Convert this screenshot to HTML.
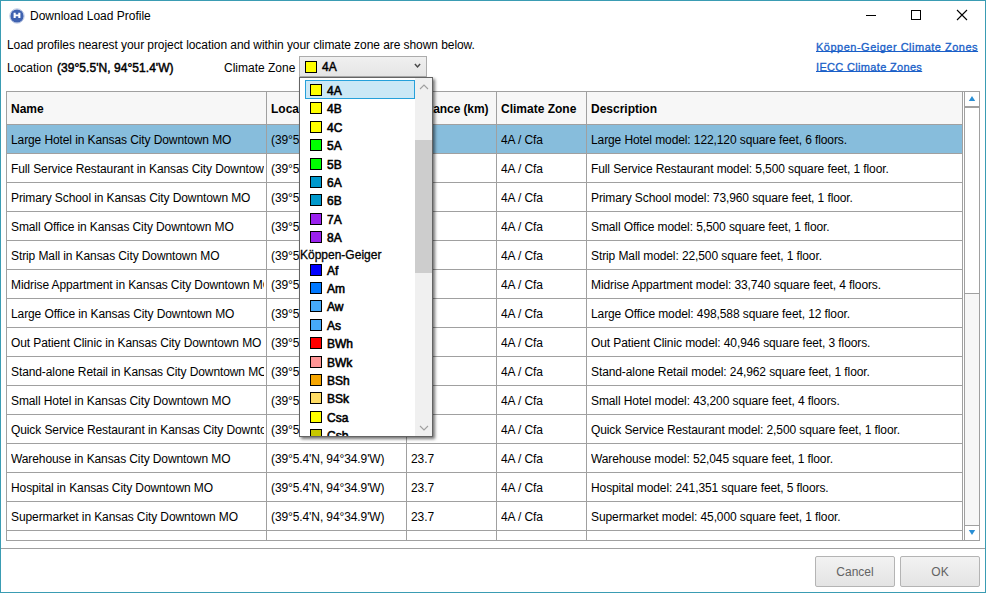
<!DOCTYPE html>
<html><head><meta charset="utf-8"><style>
*{box-sizing:border-box}
html,body{margin:0;padding:0}
body{width:986px;height:593px;position:relative;overflow:hidden;background:#fff;font-family:"Liberation Sans",sans-serif;font-size:12px;color:#000}
.a{position:absolute;white-space:nowrap}
.win{position:absolute;left:0;top:0;width:986px;height:593px;border:1px solid #3a9cb3}
.t{line-height:16px}
.cell{position:absolute;overflow:hidden;white-space:nowrap;line-height:16px;letter-spacing:-0.1px}
.hl{position:absolute;height:1px;background:#a0a0a0}
.vl{position:absolute;width:1px;background:#a0a0a0}
.sw{position:absolute;width:12px;height:12px;border:1px solid #000}
.it{position:absolute;-webkit-text-stroke:0.55px #000;line-height:16px}
.lnk{position:absolute;color:#1a5fc8;text-decoration:underline;text-decoration-skip-ink:none;text-underline-offset:-0.4px;-webkit-text-stroke:0.3px #1a5fc8;font-size:11px;line-height:16px;white-space:nowrap}
.btn{position:absolute;top:556px;width:80px;height:31px;border:1px solid #b4b4b4;border-radius:2px;background:linear-gradient(#f2f2f2,#e4e4e4);color:#636363;text-align:center;line-height:31px;font-size:12px}
</style></head><body>
<div class="win"></div>

<svg class="a" style="left:9px;top:8px" width="16" height="16" viewBox="0 0 16 16"><circle cx="8" cy="8" r="6.6" fill="#3f62b0"/><circle cx="8" cy="8" r="7.2" fill="none" stroke="#3f62b0" stroke-opacity=".35" stroke-width="1"/><path d="M4.6 4.8h2.1v1.7h2.6V4.8h2.1v5.1H9.3V8.2H6.7v1.7H4.6z" fill="#fff"/></svg>
<div class="a t" style="left:30px;top:8px;font-size:12px">Download Load Profile</div>
<div class="a" style="left:866px;top:15px;width:10px;height:1px;background:#000"></div>
<div class="a" style="left:911px;top:10px;width:10px;height:10px;border:1px solid #000"></div>
<svg class="a" style="left:956px;top:9px" width="12" height="12" viewBox="0 0 12 12"><path d="M1 1L11 11M11 1L1 11" stroke="#000" stroke-width="1.1"/></svg>

<div class="a t" style="left:7px;top:37px;letter-spacing:-0.065px">Load profiles nearest your project location and within your climate zone are shown below.</div>
<div class="a t" style="left:7px;top:60px">Location</div>
<div class="a t" style="left:57px;top:60px;-webkit-text-stroke:0.45px #000;letter-spacing:0.05px">(39&deg;5.5'N, 94&deg;51.4'W)</div>
<div class="a t" style="left:224px;top:60px">Climate Zone</div>
<div class="lnk" style="left:816px;top:39px;letter-spacing:0.5px">K&ouml;ppen-Geiger Climate Zones</div>
<div class="lnk" style="left:816px;top:59px;letter-spacing:0.33px">IECC Climate Zones</div>

<div class="a" style="left:299px;top:56px;width:128px;height:21px;border:1px solid #acacac;background:linear-gradient(#f0f0f0,#e5e5e5)"></div>
<div class="sw" style="left:305px;top:61px;background:#ffff00"></div>
<div class="a t" style="left:322px;top:59px;-webkit-text-stroke:0.45px #000">4A</div>
<svg class="a" style="left:414px;top:63px" width="7" height="6" viewBox="0 0 7 6"><path d="M0.9 1L3.5 3.9L6.1 1" fill="none" stroke="#4a4a4a" stroke-width="1.5"/></svg>

<div class="a" style="left:6px;top:91px;width:974px;height:450px;border:1px solid #a0a0a0"></div>
<div class="a" style="left:7px;top:92px;width:955px;height:32px;background:#f7f7f7"></div>
<div class="a" style="left:7px;top:125px;width:955px;height:28px;background:#87bddc"></div>
<div class="vl" style="left:266px;top:91px;height:449px"></div>
<div class="vl" style="left:406px;top:91px;height:449px"></div>
<div class="vl" style="left:496px;top:91px;height:449px"></div>
<div class="vl" style="left:586px;top:91px;height:449px"></div>
<div class="vl" style="left:962px;top:91px;height:449px"></div>
<div class="a" style="left:963px;top:92px;width:1px;height:448px;background:#fff"></div>
<div class="hl" style="left:6px;top:124px;width:957px"></div>
<div class="hl" style="left:6px;top:153px;width:957px"></div>
<div class="hl" style="left:6px;top:182px;width:957px"></div>
<div class="hl" style="left:6px;top:211px;width:957px"></div>
<div class="hl" style="left:6px;top:240px;width:957px"></div>
<div class="hl" style="left:6px;top:269px;width:957px"></div>
<div class="hl" style="left:6px;top:298px;width:957px"></div>
<div class="hl" style="left:6px;top:327px;width:957px"></div>
<div class="hl" style="left:6px;top:356px;width:957px"></div>
<div class="hl" style="left:6px;top:385px;width:957px"></div>
<div class="hl" style="left:6px;top:414px;width:957px"></div>
<div class="hl" style="left:6px;top:443px;width:957px"></div>
<div class="hl" style="left:6px;top:472px;width:957px"></div>
<div class="hl" style="left:6px;top:501px;width:957px"></div>
<div class="hl" style="left:6px;top:530px;width:957px"></div>
<div class="cell" style="left:11px;top:101px;width:255px;font-weight:bold;letter-spacing:0">Name</div>
<div class="cell" style="left:271px;top:101px;width:135px;font-weight:bold;letter-spacing:0">Location</div>
<div class="cell" style="left:411px;top:101px;width:85px;font-weight:bold;letter-spacing:-0.1px">Distance (km)</div>
<div class="cell" style="left:501px;top:101px;width:85px;font-weight:bold;letter-spacing:0">Climate Zone</div>
<div class="cell" style="left:591px;top:101px;width:372px;font-weight:bold;letter-spacing:0">Description</div>
<div class="cell" style="left:11px;top:132px;width:253px">Large Hotel in Kansas City Downtown MO</div>
<div class="cell" style="left:271px;top:132px;width:135px">(39&deg;5.4'N, 94&deg;34.9'W)</div>
<div class="cell" style="left:501px;top:132px;width:85px">4A / Cfa</div>
<div class="cell" style="left:591px;top:132px;width:372px">Large Hotel model: 122,120 square feet, 6 floors.</div>
<div class="cell" style="left:11px;top:161px;width:253px">Full Service Restaurant in Kansas City Downtown MO</div>
<div class="cell" style="left:271px;top:161px;width:135px">(39&deg;5.4'N, 94&deg;34.9'W)</div>
<div class="cell" style="left:501px;top:161px;width:85px">4A / Cfa</div>
<div class="cell" style="left:591px;top:161px;width:372px">Full Service Restaurant model: 5,500 square feet, 1 floor.</div>
<div class="cell" style="left:11px;top:190px;width:253px">Primary School in Kansas City Downtown MO</div>
<div class="cell" style="left:271px;top:190px;width:135px">(39&deg;5.4'N, 94&deg;34.9'W)</div>
<div class="cell" style="left:501px;top:190px;width:85px">4A / Cfa</div>
<div class="cell" style="left:591px;top:190px;width:372px">Primary School model: 73,960 square feet, 1 floor.</div>
<div class="cell" style="left:11px;top:219px;width:253px">Small Office in Kansas City Downtown MO</div>
<div class="cell" style="left:271px;top:219px;width:135px">(39&deg;5.4'N, 94&deg;34.9'W)</div>
<div class="cell" style="left:501px;top:219px;width:85px">4A / Cfa</div>
<div class="cell" style="left:591px;top:219px;width:372px">Small Office model: 5,500 square feet, 1 floor.</div>
<div class="cell" style="left:11px;top:248px;width:253px">Strip Mall in Kansas City Downtown MO</div>
<div class="cell" style="left:271px;top:248px;width:135px">(39&deg;5.4'N, 94&deg;34.9'W)</div>
<div class="cell" style="left:501px;top:248px;width:85px">4A / Cfa</div>
<div class="cell" style="left:591px;top:248px;width:372px">Strip Mall model: 22,500 square feet, 1 floor.</div>
<div class="cell" style="left:11px;top:277px;width:253px">Midrise Appartment in Kansas City Downtown MO</div>
<div class="cell" style="left:271px;top:277px;width:135px">(39&deg;5.4'N, 94&deg;34.9'W)</div>
<div class="cell" style="left:501px;top:277px;width:85px">4A / Cfa</div>
<div class="cell" style="left:591px;top:277px;width:372px">Midrise Appartment model: 33,740 square feet, 4 floors.</div>
<div class="cell" style="left:11px;top:306px;width:253px">Large Office in Kansas City Downtown MO</div>
<div class="cell" style="left:271px;top:306px;width:135px">(39&deg;5.4'N, 94&deg;34.9'W)</div>
<div class="cell" style="left:501px;top:306px;width:85px">4A / Cfa</div>
<div class="cell" style="left:591px;top:306px;width:372px">Large Office model: 498,588 square feet, 12 floor.</div>
<div class="cell" style="left:11px;top:335px;width:253px">Out Patient Clinic in Kansas City Downtown MO</div>
<div class="cell" style="left:271px;top:335px;width:135px">(39&deg;5.4'N, 94&deg;34.9'W)</div>
<div class="cell" style="left:501px;top:335px;width:85px">4A / Cfa</div>
<div class="cell" style="left:591px;top:335px;width:372px">Out Patient Clinic model: 40,946 square feet, 3 floors.</div>
<div class="cell" style="left:11px;top:364px;width:253px">Stand-alone Retail in Kansas City Downtown MO</div>
<div class="cell" style="left:271px;top:364px;width:135px">(39&deg;5.4'N, 94&deg;34.9'W)</div>
<div class="cell" style="left:501px;top:364px;width:85px">4A / Cfa</div>
<div class="cell" style="left:591px;top:364px;width:372px">Stand-alone Retail model: 24,962 square feet, 1 floor.</div>
<div class="cell" style="left:11px;top:393px;width:253px">Small Hotel in Kansas City Downtown MO</div>
<div class="cell" style="left:271px;top:393px;width:135px">(39&deg;5.4'N, 94&deg;34.9'W)</div>
<div class="cell" style="left:501px;top:393px;width:85px">4A / Cfa</div>
<div class="cell" style="left:591px;top:393px;width:372px">Small Hotel model: 43,200 square feet, 4 floors.</div>
<div class="cell" style="left:11px;top:422px;width:253px">Quick Service Restaurant in Kansas City Downtown MO</div>
<div class="cell" style="left:271px;top:422px;width:135px">(39&deg;5.4'N, 94&deg;34.9'W)</div>
<div class="cell" style="left:501px;top:422px;width:85px">4A / Cfa</div>
<div class="cell" style="left:591px;top:422px;width:372px">Quick Service Restaurant model: 2,500 square feet, 1 floor.</div>
<div class="cell" style="left:11px;top:451px;width:253px">Warehouse in Kansas City Downtown MO</div>
<div class="cell" style="left:271px;top:451px;width:135px">(39&deg;5.4'N, 94&deg;34.9'W)</div>
<div class="cell" style="left:411px;top:451px;width:85px">23.7</div>
<div class="cell" style="left:501px;top:451px;width:85px">4A / Cfa</div>
<div class="cell" style="left:591px;top:451px;width:372px">Warehouse model: 52,045 square feet, 1 floor.</div>
<div class="cell" style="left:11px;top:480px;width:253px">Hospital in Kansas City Downtown MO</div>
<div class="cell" style="left:271px;top:480px;width:135px">(39&deg;5.4'N, 94&deg;34.9'W)</div>
<div class="cell" style="left:411px;top:480px;width:85px">23.7</div>
<div class="cell" style="left:501px;top:480px;width:85px">4A / Cfa</div>
<div class="cell" style="left:591px;top:480px;width:372px">Hospital model: 241,351 square feet, 5 floors.</div>
<div class="cell" style="left:11px;top:509px;width:253px">Supermarket in Kansas City Downtown MO</div>
<div class="cell" style="left:271px;top:509px;width:135px">(39&deg;5.4'N, 94&deg;34.9'W)</div>
<div class="cell" style="left:411px;top:509px;width:85px">23.7</div>
<div class="cell" style="left:501px;top:509px;width:85px">4A / Cfa</div>
<div class="cell" style="left:591px;top:509px;width:372px">Supermarket model: 45,000 square feet, 1 floor.</div>
<div class="a" style="left:964px;top:91px;width:16px;height:450px;border:1px solid #a0a0a0;background:#fff"></div>
<div class="a" style="left:965px;top:294px;width:14px;height:231px;background:#f7f7f7"></div>
<div class="a" style="left:964px;top:106px;width:16px;height:2px;background:#a0a0a0"></div>
<div class="a" style="left:964px;top:293px;width:16px;height:1px;background:#a0a0a0"></div>
<div class="a" style="left:964px;top:525px;width:16px;height:1px;background:#a0a0a0"></div>
<svg class="a" style="left:964px;top:91px" width="16" height="16" viewBox="0 0 16 16"><path d="M8 5L11.2 10H4.8z" fill="#2a8fd5"/></svg>
<svg class="a" style="left:964px;top:525px" width="16" height="16" viewBox="0 0 16 16"><path d="M4.8 5H11.2L8 10z" fill="#2a8fd5"/></svg>

<div class="a" style="left:1px;top:548px;width:984px;height:1px;background:#a0a0a0"></div>
<div class="btn" style="left:815px">Cancel</div>
<div class="btn" style="left:900px">OK</div>

<div class="a" style="left:299px;top:77px;width:134px;height:360px;box-shadow:2px 2px 3px rgba(0,0,0,.55)"></div>
<div class="a" style="left:299px;top:77px;width:134px;height:360px;border:1px solid #646464;background:#fff;overflow:hidden">
<div class="a" style="left:115px;top:0;width:17px;height:358px;background:#f0f0f0"></div>
<div class="a" style="left:115px;top:62px;width:17px;height:133px;background:#cdcdcd"></div>
<svg class="a" style="left:119px;top:6px" width="10" height="6" viewBox="0 0 10 6"><path d="M1 5L5 1L9 5" fill="none" stroke="#a0a0a0" stroke-width="1.1"/></svg>
<svg class="a" style="left:119px;top:347px" width="10" height="6" viewBox="0 0 10 6"><path d="M1 1L5 5L9 1" fill="none" stroke="#a0a0a0" stroke-width="1.1"/></svg>
<div class="a" style="left:5px;top:2px;width:110px;height:19px;border:1px solid #26a0da;background:#cbe8f6"></div>

<div class="sw" style="left:10px;top:6.0px;background:#ffff00"></div>
<div class="it" style="left:27px;top:5.0px">4A</div>
<div class="sw" style="left:10px;top:24.4px;background:#ffff00"></div>
<div class="it" style="left:27px;top:23.4px">4B</div>
<div class="sw" style="left:10px;top:42.8px;background:#ffff00"></div>
<div class="it" style="left:27px;top:41.8px">4C</div>
<div class="sw" style="left:10px;top:61.2px;background:#00ff00"></div>
<div class="it" style="left:27px;top:60.2px">5A</div>
<div class="sw" style="left:10px;top:79.6px;background:#00ff00"></div>
<div class="it" style="left:27px;top:78.6px">5B</div>
<div class="sw" style="left:10px;top:98.0px;background:#0099cc"></div>
<div class="it" style="left:27px;top:97.0px">6A</div>
<div class="sw" style="left:10px;top:116.4px;background:#0099cc"></div>
<div class="it" style="left:27px;top:115.4px">6B</div>
<div class="sw" style="left:10px;top:134.8px;background:#9a22ee"></div>
<div class="it" style="left:27px;top:133.8px">7A</div>
<div class="sw" style="left:10px;top:153.2px;background:#9a22ee"></div>
<div class="it" style="left:27px;top:152.2px">8A</div>
<div class="a t" style="left:0px;-webkit-text-stroke:0.3px #000;top:168.7px">K&ouml;ppen-Geiger</div>
<div class="sw" style="left:10px;top:185.6px;background:#0000ff"></div>
<div class="it" style="left:27px;top:184.6px">Af</div>
<div class="sw" style="left:10px;top:204.0px;background:#0078ff"></div>
<div class="it" style="left:27px;top:203.0px">Am</div>
<div class="sw" style="left:10px;top:222.4px;background:#46aafa"></div>
<div class="it" style="left:27px;top:221.4px">Aw</div>
<div class="sw" style="left:10px;top:240.8px;background:#46aafa"></div>
<div class="it" style="left:27px;top:239.8px">As</div>
<div class="sw" style="left:10px;top:259.2px;background:#ff0000"></div>
<div class="it" style="left:27px;top:258.2px">BWh</div>
<div class="sw" style="left:10px;top:277.6px;background:#ff9696"></div>
<div class="it" style="left:27px;top:276.6px">BWk</div>
<div class="sw" style="left:10px;top:296.0px;background:#f5a500"></div>
<div class="it" style="left:27px;top:295.0px">BSh</div>
<div class="sw" style="left:10px;top:314.4px;background:#ffdc64"></div>
<div class="it" style="left:27px;top:313.4px">BSk</div>
<div class="sw" style="left:10px;top:332.8px;background:#ffff00"></div>
<div class="it" style="left:27px;top:331.8px">Csa</div>
<div class="sw" style="left:10px;top:351.2px;background:#c8c800"></div>
<div class="it" style="left:27px;top:350.2px">Csb</div>
</div>
</body></html>
